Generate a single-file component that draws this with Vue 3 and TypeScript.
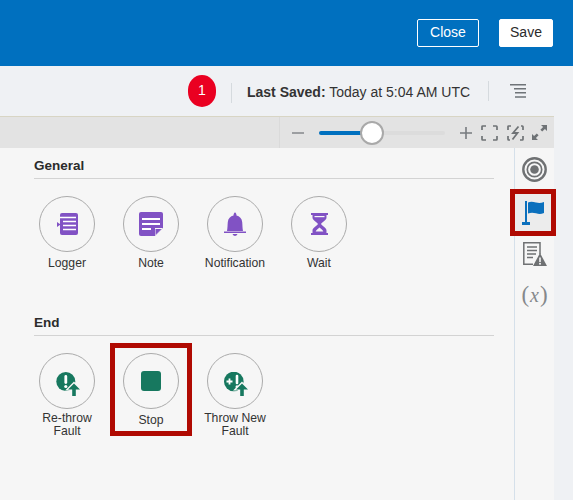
<script setup lang="ts">
interface PaletteItem { label: string[]; icon: string; marked?: boolean }
const general: PaletteItem[] = [
  { label: ['Logger'], icon: 'logger' },
  { label: ['Note'], icon: 'note' },
  { label: ['Notification'], icon: 'bell' },
  { label: ['Wait'], icon: 'wait' },
]
const end: PaletteItem[] = [
  { label: ['Re-throw', 'Fault'], icon: 'rethrow' },
  { label: ['Stop'], icon: 'stop', marked: true },
  { label: ['Throw New', 'Fault'], icon: 'thrownew' },
]
const sections = [
  { title: 'General', items: general },
  { title: 'End', items: end },
]
</script>

<template>
  <div class="page">
    <header class="top">
      <button class="btn ghost">Close</button>
      <button class="btn solid">Save</button>
    </header>
    <div class="status">
      <span class="badge">1</span>
      <span class="sep first"></span>
      <span class="saved"><b>Last Saved:</b> Today at 5:04 AM UTC</span>
      <span class="sep second"></span>
      <svg class="menu" width="16" height="15" viewBox="0 0 16 15">
        <path d="M0 .75h16M4 4.750h12M5 8.750h11M5 13h11" stroke="#6f7478" stroke-width="1.500" fill="none" />
      </svg>
    </div>
    <div class="main">
      <div class="left">
        <div class="zoombar">
          <div class="zoomgroup">
            <span class="zoomsign"><svg width="12" height="12" viewBox="0 0 12 12"><path d="M0 6h12" stroke="#8a8d90" stroke-width="1.600" /></svg></span>
            <div class="track"><div class="fill"></div><div class="thumb"></div></div>
            <span class="zoomsign"><svg width="12" height="12" viewBox="0 0 12 12"><path d="M0 6h12M6 0v12" stroke="#777b7f" stroke-width="1.600" /></svg></span>
            <svg class="zi" width="17" height="16" viewBox="0 0 17 16" fill="none" stroke="#6f7376" stroke-width="1.700">
              <path d="M1 5V1.700A.7.7 0 0 1 1.700 1H5M12 1h3.300a.7.7 0 0 1 .7.7V5M16 11v3.300a.7.7 0 0 1-.7.7H12M5 15H1.700a.7.7 0 0 1-.7-.7V11" />
            </svg>
            <svg class="zi" width="17" height="16" viewBox="0 0 17 16" fill="none" stroke="#6f7376" stroke-width="1.700">
              <path d="M1 5V1.700A.7.7 0 0 1 1.700 1H4M14 1h1.300a.7.7 0 0 1 .7.7V5M16 11v3.300a.7.7 0 0 1-.7.7H13M3 15H1.700a.7.7 0 0 1-.7-.7V11" />
              <path d="M11.500 1.500 6 8h4.500l-5 6.500" stroke-width="1.800" />
            </svg>
            <svg class="zi" width="15" height="15" viewBox="0 0 15 15" fill="#6f7376">
              <path d="M9 0h6v6l-2.100-2.100-2.700 2.700-1.800-1.800 2.700-2.700zM6 15H0V9l2.100 2.100 2.700-2.700 1.800 1.800-2.700 2.700z" />
            </svg>
          </div>
        </div>
        <div class="content">
          <div class="palette">
            <section v-for="s in sections" :key="s.title" class="section">
              <h3>{{ s.title }}</h3>
              <div class="items">
                <div v-for="it in s.items" :key="it.icon" class="item">
                  <div v-if="it.marked" class="mark"></div>
                  <div class="circle">
                    <svg v-if="it.icon === 'logger'" width="21" height="22" viewBox="0 0 21 22">
                      <rect x="3" y="0" width="18" height="22" rx="2" fill="#8152c4" />
                      <path d="M0 9l3.500 2.500L0 14z" fill="#8152c4" />
                      <path d="M3 4.500h16M6 8.500h13M6 12.500h13M6 16.500h13" stroke="#fff" stroke-width="1.300" />
                    </svg>
                    <svg v-else-if="it.icon === 'note'" width="24" height="24" viewBox="0 0 24 24">
                      <path d="M2 0h20a2 2 0 0 1 2 2v14l-8 8H2a2 2 0 0 1-2-2V2a2 2 0 0 1 2-2z" fill="#8152c4" />
                      <path d="M3 7h18M3 12h18M3 17h9" stroke="#fff" stroke-width="1.800" />
                      <path d="M16 24l8-8h-8z" fill="#f6f6f6" />
                      <path d="M16.500 17h6l-6 6z" fill="#8152c4" />
                    </svg>
                    <svg v-else-if="it.icon === 'bell'" width="22" height="24" viewBox="0 0 22 24" fill="#8152c4">
                      <path d="M3 19c.6-3 .5-6 .8-9C4.100 6.500 6.500 4.200 9.500 3.500 9.500 2.500 10 .5 11 .5s1.500 2 1.500 3c3 .7 5.400 3 5.700 6.500.3 3 .2 6 .8 9z" />
                      <path d="M0 19.500h22V21H0zM8.500 22h5c-.5 1.200-1.500 2-2.500 2s-2-.8-2.500-2z" />
                    </svg>
                    <svg v-else-if="it.icon === 'wait'" width="17" height="22" viewBox="0 0 17 22" fill="#8152c4">
                      <path d="M0 0h17v2h-1.500v2.500C15.500 7 12 8.500 10 11c2 2.500 5.500 4 5.500 6.500V20H17v2H0v-2h1.500v-2.500C1.500 15 5 13.500 7 11 5 8.500 1.500 7 1.500 4.500V2H0z" />
                      <path d="M8.500 14.500c1.500 1.200 3.500 2.500 3.800 4H4.700c.3-1.500 2.300-2.800 3.800-4z" fill="#f6f6f6" />
                      <path d="M3.500 3h10v1.200h-10z" fill="#f6f6f6" />
                    </svg>
                    <svg v-else-if="it.icon === 'rethrow'" class="fault" width="24" height="24" viewBox="0 0 24 24">
                      <circle cx="9.800" cy="9.500" r="9.500" fill="#17785f" />
                      <path d="M9.800 4.500v6" stroke="#fff" stroke-width="2.800" stroke-linecap="round" />
                      <circle cx="9.800" cy="14.500" r="1.600" fill="#fff" />
                      <path d="M9 18.500 18 9.500l8 9h-4V26h-8v-7.500z" fill="#f6f6f6" />
                      <path d="M12 17.500l6-6 6 6h-4.200V24h-3.600v-6.500z" fill="#17785f" />
                    </svg>
                    <div v-else-if="it.icon === 'stop'" class="stop-square"></div>
                    <svg v-else class="fault" width="24" height="24" viewBox="0 0 24 24">
                      <circle cx="9.800" cy="9.500" r="9.800" fill="#17785f" />
                      <path d="M2.500 9.500h6M5.500 6.500v6" stroke="#fff" stroke-width="1.800" />
                      <path d="M13 4v7" stroke="#fff" stroke-width="2.600" stroke-linecap="round" />
                      <circle cx="13" cy="14.800" r="1.500" fill="#fff" />
                      <path d="M9 18.500 18 9.500l8 9h-4V26h-8v-7.500z" fill="#f6f6f6" />
                      <path d="M12 17.500l6-6 6 6h-4.200V24h-3.600v-6.500z" fill="#17785f" />
                    </svg>
                  </div>
                  <div class="label" :class="{ two: it.label.length > 1 }">
                    <div v-for="l in it.label" :key="l">{{ l }}</div>
                  </div>
                </div>
              </div>
            </section>
          </div>
          <aside class="rail">
            <div class="rail-slot target">
              <svg width="25" height="25" viewBox="0 0 25 25" fill="none" stroke="#6f7173">
                <circle cx="12.500" cy="12.500" r="11.200" stroke-width="2.400" />
                <circle cx="12.500" cy="12.500" r="7.200" stroke-width="1.700" />
                <circle cx="12.500" cy="12.500" r="4.300" fill="#6f7173" stroke="none" />
              </svg>
            </div>
            <div class="rail-slot active">
              <svg width="22" height="24" viewBox="0 0 22 24">
                <path d="M4 0v22" stroke="#0b70bd" stroke-width="2" />
                <path d="M0 21h8v3H0z" fill="#0b70bd" />
                <path d="M6 1.500c2.500-1.200 5-.8 8 0s5 .6 8-.5V12c-3 1.200-5 1.200-8 .3s-5.500-.8-8 .2z" fill="#0b70bd" />
              </svg>
            </div>
            <div class="rail-slot doc">
              <svg width="24" height="24" viewBox="0 0 24 24">
                <path d="M17 12V.8H.8v21.400H10" fill="none" stroke="#6f7173" stroke-width="1.500" />
                <path d="M4 5h10M4 8.500h10M4 12h9M4 15.500h6" stroke="#6f7173" stroke-width="1.300" />
                <path d="M17 11l7 13H10z" fill="#6f7173" />
                <path d="M17 15.500v4.500" stroke="#f6f6f6" stroke-width="1.600" />
                <circle cx="17" cy="21.800" r="1" fill="#f6f6f6" />
              </svg>
            </div>
            <div class="rail-slot fx"><span class="paren">(</span><i>x</i><span class="paren">)</span></div>
          </aside>
        </div>
      </div>
      <div class="gutter"></div>
    </div>
  </div>
</template>

<style>
html, body { margin: 0; padding: 0; }
</style>

<style scoped>
.page {
  width: 573px;
  height: 500px;
  overflow: hidden;
  display: flex;
  flex-direction: column;
  font-family: "Liberation Sans", Arial, sans-serif;
  color: #2b2b2b;
  background: #eff1f4;
}
.top {
  height: 66px;
  flex: none;
  box-sizing: border-box;
  background: #0070bf;
  display: flex;
  justify-content: flex-end;
  align-items: flex-start;
  gap: 20px;
  padding: 19px 20px 0 0;
}
.btn {
  height: 28px;
  box-sizing: border-box;
  border-radius: 2px;
  font: 14px "Liberation Sans", Arial, sans-serif;
  padding: 0 0 2px;
}
.ghost { width: 62px; background: transparent; border: 1px solid #fff; color: #fff; }
.solid { width: 54px; background: #fff; border: 1px solid #fff; color: #2b2b2b; }
.status {
  height: 50px;
  flex: none;
  display: flex;
  align-items: center;
  box-sizing: border-box;
  padding-left: 188px;
}
.badge {
  width: 28px;
  height: 32px;
  border-radius: 14px / 15px;
  background: #ea0021;
  color: #fff;
  font-size: 14px;
  display: flex;
  align-items: center;
  justify-content: center;
  padding-bottom: 3px;
  box-sizing: border-box;
}
.sep { width: 1px; background: #d5dade; }
.sep.first { height: 20px; margin: 4px 15px 0; }
.saved { font-size: 14px; width: 241px; color: #333; margin-top: 1px; }
.saved b { font-weight: bold; }
.sep.second { height: 20px; margin-top: -1px; }
.menu { margin: 0 0 0 21px; }
.main { flex: 1; display: flex; min-height: 0; }
.left { width: 554px; flex: none; display: flex; flex-direction: column; }
.gutter { flex: 1; }
.zoombar {
  height: 32px;
  flex: none;
  box-sizing: border-box;
  background: #e3e3e3;
  border-top: 1px solid #d8d5c4;
  display: flex;
  justify-content: flex-end;
}
.zoomgroup {
  width: 275px;
  box-sizing: border-box;
  border-left: 1px solid #dadada;
  display: flex;
  align-items: center;
  padding-left: 12px;
}
.zoomsign { display: flex; width: 12px; }
.track {
  position: relative;
  width: 126px;
  height: 4px;
  margin: 0 15px;
  border-radius: 2px;
  background: #dcdcdc;
}
.fill { width: 53px; height: 4px; background: #0070bf; border-radius: 2px; }
.thumb {
  position: absolute;
  left: 41px;
  top: -10px;
  width: 24px;
  height: 24px;
  box-sizing: border-box;
  border: 2px solid #a9a9a9;
  border-radius: 50%;
  background: #fff;
}
.zi { margin-left: 9px; flex: none; }
.zi:last-child { margin-left: 8px; }
.content { flex: 1; display: flex; min-height: 0; background: #f6f6f6; }
.palette {
  width: 515px;
  flex: none;
  box-sizing: border-box;
  padding: 8px 20px 0 34px;
  border-right: 1px solid #d5e0ea;
}
.section { height: 157px; }
h3 {
  margin: 0;
  height: 23px;
  line-height: 20px;
  box-sizing: border-box;
  font-size: 13.500px;
  font-weight: bold;
  color: #2b2b2b;
  border-bottom: 1px solid #d3d3d3;
}
.items { display: flex; margin: 17px 0 0 -9px; }
.item { width: 84px; position: relative; text-align: center; }
.circle {
  width: 56px;
  height: 56px;
  margin: 0 auto;
  box-sizing: border-box;
  border: 1px solid #ababab;
  border-radius: 50%;
  display: flex;
  align-items: center;
  justify-content: center;
}
.fault { margin: 5px 0 0 2px; }
.label { margin-top: 4px; font-size: 12.200px; line-height: 14px; color: #333; }
.label.two { margin-top: 3px; line-height: 13px; }
.mark {
  position: absolute;
  left: 1px;
  top: -10px;
  width: 82px;
  height: 93px;
  box-sizing: border-box;
  border: 5px solid #b00a02;
}
.stop-square { width: 20px; height: 20px; border-radius: 3px; background: #17785f; }
.rail { width: 39px; flex: none; padding-top: 2px; }
.rail-slot {
  width: 39px;
  display: flex;
  align-items: center;
  justify-content: center;
}
.target { height: 39px; }
.active {
  margin-left: -5px;
  width: 46px;
  height: 47px;
  box-sizing: border-box;
  border: 5px solid #b00a02;
  background: #ececec;
}
.doc { height: 36px; }
.fx { height: 38px; margin-top: 4px; font-family: "Liberation Serif", serif; color: #85888b; }
.fx i { font-size: 20px; margin: 0 1px; }
.paren { font-size: 23px; }
</style>
